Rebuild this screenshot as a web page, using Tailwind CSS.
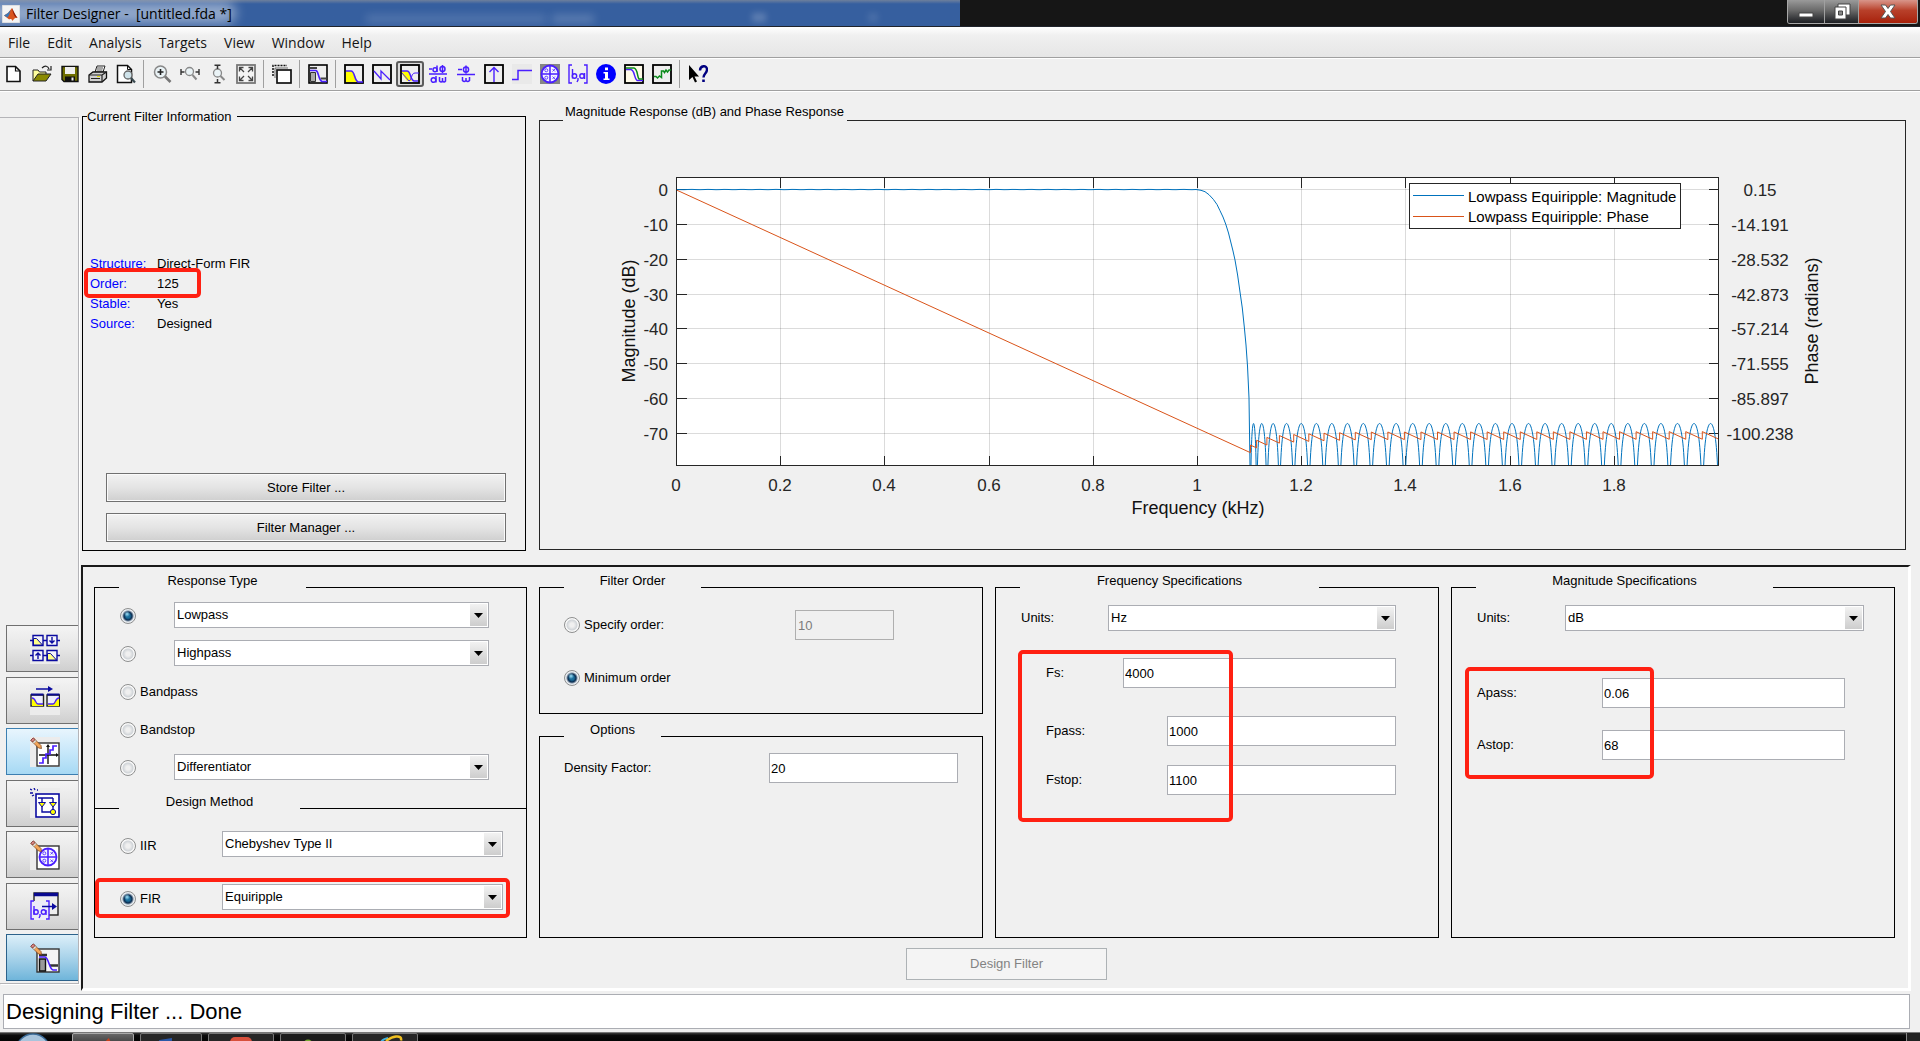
<!DOCTYPE html>
<html lang="en">
<head>
<meta charset="utf-8">
<title>Filter Designer</title>
<script src="https://cdn.jsdelivr.net/npm/@tailwindcss/browser@4"></script>
</head>
<body class="min-h-screen flex flex-col overflow-hidden bg-[#f0f0f0] text-black text-[13px] leading-[16px] font-['Liberation_Sans',Arial,sans-serif]">

<!-- shared symbols -->
<svg class="hidden">
  <symbol id="pencil" viewBox="0 0 12 12">
    <path d="M1 3.5 3.5 1 11 8.5 11.500 11.500 8.500 11Z" fill="#f2a65a" stroke="#7a3a10" stroke-width=".7"/>
    <path d="M.8 3.2 3.2.8 5 2.600 2.600 5Z" fill="#d98585" stroke="#6b2d2d" stroke-width=".7"/>
    <path d="M3 5.400 5.400 3 6.400 4 4 6.400Z" fill="#fff" stroke="#777" stroke-width=".5"/>
  </symbol>
  <symbol id="polezero" viewBox="0 0 20 20">
    <circle cx="10" cy="10" r="8.500" fill="#f4f4ff" stroke="#4a1fff" stroke-width="1.800"/>
    <path d="M10 1.500v17M1.500 10h17" stroke="#4a1fff" stroke-width="1.500"/>
    <path d="m12.500 5 2.500 2.500m0-2.500-2.500 2.500M12.500 12.500l2.500 2.500m0-2.500-2.500 2.500" stroke="#4a1fff" stroke-width=".8"/>
    <circle cx="6.300" cy="6.300" r="1.500" fill="none" stroke="#4a1fff" stroke-width=".8"/>
    <circle cx="6.300" cy="13.700" r="1.500" fill="none" stroke="#4a1fff" stroke-width=".8"/>
  </symbol>
</svg>

<header class="relative h-[27px] flex items-stretch bg-[#161616] border-b border-[#20242c] overflow-hidden">
  <div class="relative w-1/2 bg-linear-to-b from-[#6d7f9c] via-[#365f9f] via-15% to-[#365f9f] overflow-hidden flex items-center gap-[6px] pl-[2px] pt-[2px]">
    <div class="absolute -left-4 top-[2px] w-[252px] h-[22px] rounded-full bg-white/45 blur-[6px]"></div>
    <div class="absolute left-[366px] top-[15px] w-[180px] h-[8px] bg-white/15 blur-[4px]"></div>
    <div class="absolute left-[552px] top-[15px] w-[42px] h-[8px] bg-white/20 blur-[4px]"></div>
    <div class="absolute left-[752px] top-[13px] w-[14px] h-[9px] bg-white/20 blur-[3px]"></div>
    <div class="absolute left-[868px] top-[13px] w-[10px] h-[9px] bg-white/10 blur-[3px]"></div>
    <svg class="relative size-[18px]" viewBox="0 0 18 18"><rect width="18" height="18" fill="#f4f4f4" stroke="#c4c8d0"/><path d="M2 10.500 6 8l4-5c1 2 2.500 6 5.500 10-2-.5-3 0-5 3-.8-2-1.800-2.500-3.300-1.500Z" fill="#d9541e"/><path d="M2 10.500 6 8l2.500-3c-.5 3-1.500 5.500-3 7.500Z" fill="#3a78b8"/><path d="M10 3c1 2 2.500 6 5.500 10-3-1-4-3-5.500-10Z" fill="#8a1c0c"/></svg>
    <h1 class="relative text-[14px] leading-[20px] whitespace-pre font-['Open_Sans',sans-serif]">Filter Designer -  [untitled.fda *]</h1>
  </div>
  <div class="flex-1"></div>
  <div class="flex h-[24px] mr-[2px] border-x border-b border-[#a8a8a8] rounded-b-[3px] overflow-hidden">
    <button aria-label="Minimize" class="w-[37px] flex items-center justify-center bg-linear-to-b from-[#9a9a9a] via-[#6a6a6a] via-45% to-[#1e2024] border-r border-[#a0a0a0]"><svg class="w-[18px] h-[18px]" viewBox="0 0 18 18"><path d="M2 10h14v4H2z" fill="#fff" stroke="#444"/></svg></button>
    <button aria-label="Restore" class="w-[34px] flex items-center justify-center bg-linear-to-b from-[#9a9a9a] via-[#6a6a6a] via-45% to-[#1e2024] border-r border-[#a0a0a0]"><svg class="w-[18px] h-[18px]" viewBox="0 0 18 18"><path d="M5 1h12v11H5z" fill="#fff" stroke="#444"/><path d="M2 4h11v12H2z" fill="#fff" stroke="#444"/><path d="M5.500 8h4v4h-4z" fill="#888" stroke="#444"/></svg></button>
    <button aria-label="Close" class="w-[58px] flex items-center justify-center bg-linear-to-b from-[#d8958a] via-[#b8402a] via-45% to-[#a82008]"><svg class="w-[18px] h-[18px]" viewBox="0 0 18 18"><path d="m2 2 4.500 0 2.500 3.500 2.500-3.500 4.500 0-4.500 6.500 4.500 6.500h-4.500l-2.500-3.500-2.500 3.500h-4.500l4.500-6.500Z" fill="#fff" stroke="#555"/></svg></button>
  </div>
</header>

<nav class="h-[31px] flex items-center gap-[17px] pl-[8px] pt-[2px] bg-linear-to-b from-white from-0% via-[#f0f0f0] via-28% to-[#e6e6e6] border-b border-[#a0a0a0] text-[14px] leading-[20px] font-['Open_Sans',sans-serif] text-[#151515]">
  <a href="#">File</a><a href="#">Edit</a><a href="#">Analysis</a><a href="#">Targets</a><a href="#">View</a><a href="#">Window</a><a href="#">Help</a>
</nav>

<div role="toolbar" class="h-[33px] flex items-center pb-[2px] border-t border-t-white border-b border-b-[#a0a0a0] shadow-[0_1px_0_#fff]">
  <button aria-label="New" class="w-[28px] h-[26px] grid place-items-center"><svg class="size-[20px]" viewBox="0 0 20 20"><path d="M3 2.500h8.500L16 7v10.500H3Z" fill="#fff" stroke="#111" stroke-width="1.600"/><path d="M11.500 2.500V7H16" fill="none" stroke="#111" stroke-width="1.200"/></svg></button>
  <button aria-label="Open" class="w-[28px] h-[26px] grid place-items-center"><svg class="size-[20px]" viewBox="0 0 20 20"><path d="M1 17V6h5l1.500 2H14v3" fill="#ffff9c" stroke="#222"/><path d="M1 17 6 10h13l-5 7Z" fill="#8a8a00" stroke="#222"/><path d="M10 4c3-3 6-2 7 1m2-3v4h-4" fill="none" stroke="#222" stroke-width="1.200"/></svg></button>
  <button aria-label="Save" class="w-[28px] h-[26px] grid place-items-center"><svg class="size-[20px]" viewBox="0 0 20 20"><path d="M2 2.500h16v15H4l-2-2Z" fill="#6e6e00" stroke="#111" stroke-width="1.400"/><path d="M5 3h10v7H5z" fill="#eee"/><path d="M5 12.500h10v5H5z" fill="#111"/><path d="M11.500 13.500h2v3h-2z" fill="#eee"/></svg></button>
  <button aria-label="Print" class="w-[28px] h-[26px] grid place-items-center"><svg class="size-[20px]" viewBox="0 0 20 20"><path d="M7 8 9 2h8l-2 6Z" fill="#fff" stroke="#222"/><path d="M9 4h6M8.500 6h6" stroke="#222" stroke-width=".8"/><path d="m1 11 4-3h13.500v6L14 18H1Z" fill="#d0d0d0" stroke="#111" stroke-width="1.300"/><path d="M1 11h13v7M14 11l4.500-3M3 14.500h9" fill="none" stroke="#222" stroke-width="1.200"/><path d="M9 12.500h3" stroke="#dd0" /></svg></button>
  <button aria-label="Print preview" class="w-[28px] h-[26px] grid place-items-center"><svg class="size-[20px]" viewBox="0 0 20 20"><path d="M1.500 1.500h10l4 4v13h-14Z" fill="#fff" stroke="#111" stroke-width="1.500"/><path d="M11.500 1.500v4h4" fill="none" stroke="#111"/><circle cx="12" cy="11" r="4" fill="#cfe3ea" stroke="#666" stroke-width="1.300"/><path d="m15 14 4 4.500" stroke="#3a4a50" stroke-width="2.200"/></svg></button>
  <span class="w-px h-[28px] ml-[3px] mr-[4px] bg-[#a0a0a0]"></span>
  <button aria-label="Zoom in" class="w-[28px] h-[26px] grid place-items-center"><svg class="size-[20px]" viewBox="0 0 20 20"><circle cx="8.500" cy="8" r="6" fill="#eaf3f6" stroke="#888" stroke-width="1.500"/><path d="M5.500 8h6M8.500 5v6" stroke="#222" stroke-width="1.600"/><path d="m13 12.500 5.500 5.500" stroke="#777" stroke-width="2.600"/></svg></button>
  <button aria-label="Zoom X" class="w-[28px] h-[26px] grid place-items-center"><svg class="size-[20px]" viewBox="0 0 20 20"><circle cx="9.500" cy="7.500" r="4" fill="#eaf3f6" stroke="#888" stroke-width="1.300"/><path d="m12.500 11 4 4.500" stroke="#888" stroke-width="2"/><path d="M1 5v6M19 5v6M1 8h3.500M15.500 8H19" stroke="#333" stroke-width="1.400"/></svg></button>
  <button aria-label="Zoom Y" class="w-[28px] h-[26px] grid place-items-center"><svg class="size-[20px]" viewBox="0 0 20 20"><circle cx="9.500" cy="9" r="4" fill="#eaf3f6" stroke="#888" stroke-width="1.300"/><path d="m12.500 12 4 4" stroke="#888" stroke-width="2"/><path d="M6.500 1.200h6M6.500 18.800h6M9.500 1.500V5M9.500 15v4" stroke="#333" stroke-width="1.500"/></svg></button>
  <button aria-label="Full view" class="w-[28px] h-[26px] grid place-items-center"><svg class="size-[20px]" viewBox="0 0 20 20"><rect x="1" y="1" width="18" height="18" fill="#f4f4f4" stroke="#777" stroke-width="1.800"/><path d="M3.500 7.500v-4h4M12.500 3.500h4v4M16.500 12.500v4h-4M7.500 16.500h-4v-4M4 4l4 4M16 4l-4 4M16 16l-4-4M4 16l4-4" fill="none" stroke="#444" stroke-width="1.300"/></svg></button>
  <span class="w-px h-[28px] ml-[3px] mr-[4px] bg-[#a0a0a0]"></span>
  <button aria-label="New analysis window" class="w-[28px] h-[26px] grid place-items-center"><svg class="size-[20px]" viewBox="0 0 20 20"><path d="M1 12V1.500h14" fill="none" stroke="#111" stroke-width="1.500" stroke-dasharray="2 1"/><path d="M3 14V4h13" fill="none" stroke="#333" stroke-width=".7"/><rect x="5" y="6" width="14" height="13" fill="#fff" stroke="#111" stroke-width="1.700"/></svg></button>
  <span class="w-px h-[28px] ml-[3px] mr-[4px] bg-[#a0a0a0]"></span>
  <button aria-label="Filter specifications" class="w-[28px] h-[26px] grid place-items-center"><svg class="size-[20px]" viewBox="0 0 20 20"><rect x="1" y="1" width="18" height="18" fill="#eee" stroke="#000" stroke-width="1.600"/><path d="M2.500 8.500h5v9h-5z" fill="#aaa" stroke="#333"/><path d="M2 4h7M12.500 14.500h6" stroke="#444" stroke-width="2.200"/><path d="M2 6.500h6c3 1 2 9 6 11h5" fill="none" stroke="#4a1fff" stroke-width="1.600"/></svg></button>
  <span class="w-px h-[28px] ml-[3px] mr-[4px] bg-[#a0a0a0]"></span>
  <button aria-label="Magnitude response" class="w-[28px] h-[26px] grid place-items-center"><svg class="size-[20px]" viewBox="0 0 20 20"><rect x="1" y="1" width="18" height="18" fill="#eee" stroke="#000" stroke-width="1.800"/><path d="M2 7h6c3 1 3 8 5 11H2Z" fill="#ff0"/><path d="M2 7h5c4 0 3 9 7 11h5" fill="none" stroke="#4a1fff" stroke-width="1.600"/></svg></button>
  <button aria-label="Phase response" class="w-[28px] h-[26px] grid place-items-center"><svg class="size-[20px]" viewBox="0 0 20 20"><rect x="1" y="1" width="18" height="18" fill="#eee" stroke="#000" stroke-width="1.800"/><path d="m2 7 7 8V7l9 9" fill="none" stroke="#4a1fff" stroke-width="1.300"/></svg></button>
  <button aria-label="Magnitude and phase responses" aria-pressed="true" class="w-[28px] h-[26px] grid place-items-center rounded-[3px] border-2 border-[#5c5c5c] bg-[#dcdcdc]"><svg class="size-[20px]" viewBox="0 0 20 20"><rect x="1" y="1" width="18" height="18" fill="#eee" stroke="#000" stroke-width="1.800"/><path d="M2 7h6c3 1 2 7 4 10H7L2 10Z" fill="#ff0"/><path d="M2 7h5c4 0 3 9 7 10h4" fill="none" stroke="#4a1fff" stroke-width="1.500"/><path d="m2 9 7 8c3-1 2-8 6-8h4" fill="none" stroke="#4a1fff"/></svg></button>
  <button aria-label="Group delay" class="w-[28px] h-[26px] grid place-items-center"><svg class="size-[20px]" viewBox="0 0 20 20" fill="none" stroke="#4a1fff" stroke-width="1.500"><path d="M1 10h18M1 5h3M9 1.500V8"/><circle cx="7" cy="5.800" r="2"/><circle cx="14.500" cy="5" r="2.500"/><path d="M14.500 1v8M8 12v6.500M11.500 13v4q1.700 2 3 0v-3m0 3q1.700 2 3 0v-4"/><circle cx="5.500" cy="16" r="2.300"/></svg></button>
  <button aria-label="Phase delay" class="w-[28px] h-[26px] grid place-items-center"><svg class="size-[20px]" viewBox="0 0 20 20" fill="none" stroke="#4a1fff" stroke-width="1.500"><path d="M1 10.500h18M2 5.500h4M10 1.500v8M6.500 13v3.500q1.700 2 3.500 0V14m0 2.500q1.700 2 3.500 0V13"/><circle cx="10" cy="5.500" r="2.600"/></svg></button>
  <button aria-label="Impulse response" class="w-[28px] h-[26px] grid place-items-center"><svg class="size-[20px]" viewBox="0 0 20 20"><rect x="1" y="1" width="18" height="18" fill="#eee" stroke="#000" stroke-width="1.800"/><path d="M10 18V4M5.500 8 10 3.500 14.500 8" fill="none" stroke="#4a1fff" stroke-width="1.400"/></svg></button>
  <button aria-label="Step response" class="w-[28px] h-[26px] grid place-items-center"><svg class="size-[20px]" viewBox="0 0 20 20"><rect width="20" height="20" fill="#e9e9e9"/><path d="M0 15.500h6v-9h14" fill="none" stroke="#4a1fff" stroke-width="1.500"/></svg></button>
  <button aria-label="Pole/zero plot" class="w-[28px] h-[26px] grid place-items-center"><svg class="size-[20px]" viewBox="0 0 20 20"><rect width="20" height="20" fill="#858585"/><use href="#polezero"/></svg></button>
  <button aria-label="Filter coefficients" class="w-[28px] h-[26px] grid place-items-center"><svg class="size-[20px]" viewBox="0 0 20 20" fill="none" stroke="#4a1fff" stroke-width="1.400"><path d="M4 1H1v18h3M16 1h3v18h-3M4.500 5v9.500M10 14v2l-1 2M16.500 9v6"/><circle cx="6.500" cy="12" r="2.200"/><circle cx="14" cy="12" r="2.200"/></svg></button>
  <button aria-label="Filter information" class="w-[28px] h-[26px] grid place-items-center"><svg class="size-[20px]" viewBox="0 0 20 20"><circle cx="10" cy="10" r="10" fill="#00f"/><path d="M9 3.500h3v2.700H9zM7.500 8H12v6.500h1.500V16h-6v-1.500H9V9.500H7.500Z" fill="#fff"/></svg></button>
  <button aria-label="Magnitude response estimate" class="w-[28px] h-[26px] grid place-items-center"><svg class="size-[20px]" viewBox="0 0 20 20"><rect x="1" y="1" width="18" height="18" fill="#fffbe8" stroke="#000" stroke-width="1.800"/><path d="M2 5.500h5c4 1 3 9 6 11h6" fill="none" stroke="#4a1fff" stroke-width="1.500"/><path d="M2 4h8c4 1 3 9 5 11h4" fill="none" stroke="#0a8a1a" stroke-width="1.500"/></svg></button>
  <button aria-label="Round-off noise" class="w-[28px] h-[26px] grid place-items-center"><svg class="size-[20px]" viewBox="0 0 20 20"><rect x="1" y="1" width="18" height="18" fill="#eee" stroke="#000" stroke-width="1.800"/><path d="M2 12.500h2l1.500 1.500 2-2 2 1.500V7h2l1 1.500L14 6l1.500 2L17 6h2" fill="none" stroke="#0a8a1a" stroke-width="1.500"/></svg></button>
  <span class="w-px h-[28px] ml-[3px] mr-[4px] bg-[#a0a0a0]"></span>
  <button aria-label="What's this?" class="w-[28px] h-[26px] grid place-items-center"><svg class="size-[20px]" viewBox="0 0 20 20"><path d="M1 1v15l3.500-3L7 18.500l2-1-2.500-5H11Z" fill="#000"/><path d="M12 6.500c0-5 7-6 7-1 0 4-3.500 4-3.500 8" fill="none" stroke="#000080" stroke-width="2.400"/><path d="M14.200 15.500h2.600V18h-2.600z" fill="#000080"/></svg></button>
</div>

<main class="flex-1 flex">
  <aside class="w-[79px] shrink-0 mt-[26px] mb-[8px] pl-[6px] pb-[2px] border-y border-r border-[#b4b4b8] flex flex-col justify-end shadow-[1px_1px_0_#fff]">
    <div class="h-[356px] flex flex-col justify-between">
      <button aria-label="Create a multirate filter" class="h-[47px] pl-[23px] border border-r-0 border-[#707070] bg-linear-to-b from-[#f4f4f4] via-[#e6e6e6] via-50% to-[#cfcfcf]"><svg class="size-[30px]" viewBox="0 0 30 30"><rect width="30" height="30" fill="#ececec"/><g fill="none" stroke="#0a0aa0" stroke-width="1.400"><path d="M0 6.500h30M0 21.500h30"/><path d="M3 1.500h10v10H3zM17 1.500h10v10H17zM3 16.500h10v10H3zM17 16.500h10v10H17z" fill="#f4f4fa"/><path d="M3.500 4.500h3l6 6.500h-9zM17.500 19.500h3l6 6.500h-9z" fill="#ff8" stroke-width="1"/><path d="M22 3v6m-2.500-2.500L22 9l2.500-2.500M8 25v-6m-2.500 2.500L8 19l2.500 2.500"/></g></svg></button>
      <button aria-label="Transform filter" class="h-[47px] pl-[23px] border border-r-0 border-[#707070] bg-linear-to-b from-[#f4f4f4] via-[#e6e6e6] via-50% to-[#cfcfcf]"><svg class="size-[30px]" viewBox="0 0 30 30"><rect width="30" height="30" fill="#ececec"/><path d="M6 4h14" stroke="#0a0aa0" stroke-width="1.500"/><path d="m18 1 5 3-5 3Z" fill="#0a0aa0"/><path d="M1 10h12.500v11H1zM17 10h12.500v11H17z" fill="#eef" stroke="#222" stroke-width="1.400"/><path d="M1 9.500h12.500M17 9.500h12.500" stroke="#0a0a90" stroke-width="2.200"/><path d="M2 13c4 0 4 6 7 6h4v2H2zM29 13c-4 0-4 6-7 6h-4v2h11z" fill="#ff0"/><path d="M2 13c4 0 3 6 6 6h5M29 13c-4 0-3 6-6 6h-5" fill="none" stroke="#4a1fff" stroke-width="1.300"/></svg></button>
      <button aria-label="Set quantization parameters" class="h-[47px] pl-[23px] border border-r-0 border-[#3c7fb1] bg-linear-to-b from-[#e8f5fd] via-[#c8e8fa] via-50% to-[#a6d9f4]"><svg class="size-[30px]" viewBox="0 0 30 30"><rect width="30" height="30" fill="#ececec"/><rect x="7" y="6" width="22" height="23" fill="#fff" stroke="#333" stroke-width="1.400"/><path d="M18 27V9M9 18h17" stroke="#111" stroke-width="1.400"/><path d="m18 7-2 3h4zM29 18l-3-2v4z" fill="#111"/><path d="M9 26h4v-5h3v-4h4v-4h3V9h4" fill="none" stroke="#4a1fff" stroke-width="1.700"/><use href="#pencil" width="12" height="12"/></svg></button>
      <button aria-label="Realize model" class="h-[47px] pl-[23px] border border-r-0 border-[#707070] bg-linear-to-b from-[#f4f4f4] via-[#e6e6e6] via-50% to-[#cfcfcf]"><svg class="size-[30px]" viewBox="0 0 30 30"><rect width="30" height="30" fill="#ececec"/><path d="m0 1 2 1M0 5h3M4 0l1 2M7 2h1M2 8l2-1" stroke="#0a0aa0" stroke-width="1.300"/><rect x="6" y="6" width="23" height="23" fill="#fff" stroke="#0a0aa0" stroke-width="1.600"/><path d="M8 10h15M12 10v14h10M23 10v14" fill="none" stroke="#0a0aa0" stroke-width="1.400"/><path d="M8.500 14.500h7L12 19zM19.500 14.500h7L23 19z" fill="#ff0" stroke="#0a0aa0"/><circle cx="23" cy="24" r="2.600" fill="#ff0" stroke="#0a0aa0"/></svg></button>
      <button aria-label="Pole/zero editor" class="h-[47px] pl-[23px] border border-r-0 border-[#707070] bg-linear-to-b from-[#f4f4f4] via-[#e6e6e6] via-50% to-[#cfcfcf]"><svg class="size-[30px]" viewBox="0 0 30 30"><rect width="30" height="30" fill="#ececec"/><rect x="7" y="6" width="22" height="23" fill="#fff" stroke="#333" stroke-width="1.400"/><use href="#polezero" x="8" y="7" width="20" height="20"/><use href="#pencil" width="12" height="12"/></svg></button>
      <button aria-label="Import filter" class="h-[47px] pl-[23px] border border-r-0 border-[#707070] bg-linear-to-b from-[#f4f4f4] via-[#e6e6e6] via-50% to-[#cfcfcf]"><svg class="size-[30px]" viewBox="0 0 30 30"><rect x="4" y="2" width="24" height="22" fill="#eee" stroke="#222" stroke-width="1.400"/><path d="M4 3.500h24" stroke="#0a0a90" stroke-width="3.500"/><rect x="0" y="10" width="19" height="19" fill="#ececf8"/><g fill="none" stroke="#4a1fff" stroke-width="1.400"><path d="M4 10H1v18h3M16 10h3v18h-3M4 15v9M10 23v2l-1 2M16 19v5"/><circle cx="6" cy="21" r="2.200"/><circle cx="13.500" cy="21" r="2.200"/></g><path d="M12 15.500h12" stroke="#0a0aa0" stroke-width="1.500"/><path d="m22 12 5 3.500-5 3.500z" fill="#0a0aa0"/></svg></button>
      <button aria-label="Design filter panel" class="h-[47px] pl-[23px] border border-r-0 border-[#2c628b] bg-linear-to-b from-[#dceff9] via-[#a9d3ea] via-50% to-[#6fb5da]"><svg class="size-[30px]" viewBox="0 0 30 30"><rect x="7" y="6" width="22" height="23" fill="#f4f4f4" stroke="#333" stroke-width="1.400"/><path d="M9.500 16h6v12h-6z" fill="#999" stroke="#111" stroke-width="1.400"/><path d="M9 12h8M20 22.500h8" stroke="#333" stroke-width="2.600"/><path d="M9 14h6c4 1 4 12 8 13h4" fill="none" stroke="#4a1fff" stroke-width="1.600"/><use href="#pencil" width="12" height="12"/></svg></button>
    </div>
  </aside>

  <div class="flex-1 min-w-0 pt-[25px] pl-[2px] pr-[9px] flex flex-col">
    <div class="flex gap-[13px] pl-px pr-[5px]">
      <section class="relative w-[444px] shrink-0 border border-black flex flex-col">
        <h2 class="absolute -top-[8px] left-[4px] pr-[5px] bg-[#f0f0f0]">Current Filter Information</h2>
        <dl class="relative mt-[137px] ml-[7px] grid grid-cols-[67px_1fr] leading-[20px]">
          <dt class="text-[#00f]">Structure:</dt><dd>Direct-Form FIR</dd>
          <dt class="text-[#00f]">Order:</dt><dd>125</dd>
          <dt class="text-[#00f]">Stable:</dt><dd>Yes</dd>
          <dt class="text-[#00f]">Source:</dt><dd>Designed</dd>
          <span class="absolute -left-[6px] top-[14px] w-[117px] h-[30px] rounded-[5px] border-4 border-[#ff2012] pointer-events-none"></span>
        </dl>
        <div class="mt-auto mb-[8px] ml-[23px] mr-[19px] flex flex-col gap-[11px]">
          <button class="h-[29px] border border-[#707070] shadow-[inset_0_0_0_1px_#fafafa] bg-linear-to-b from-[#f2f2f2] via-[#e4e4e4] via-50% to-[#cfcfcf]">Store Filter ...</button>
          <button class="h-[29px] border border-[#707070] shadow-[inset_0_0_0_1px_#fafafa] bg-linear-to-b from-[#f2f2f2] via-[#e4e4e4] via-50% to-[#cfcfcf]">Filter Manager ...</button>
        </div>
      </section>

      <section class="relative flex-1 min-w-0 mt-[4px] mb-px border border-[#262626]">
        <h2 class="absolute -top-[17px] left-[23px] h-[20px] pl-[2px] pr-[3px] bg-[#f0f0f0]">Magnitude Response (dB) and Phase Response</h2>
        <svg id="plot" class="block w-full h-auto" viewBox="540 121 1365 428" font-size="17" fill="#262626">
          <defs><clipPath id="axes"><rect x="676" y="177" width="1043" height="289"/></clipPath></defs>
          <rect x="676" y="177" width="1043" height="289" fill="#fff"/>
          <g id="grid" stroke="#000" stroke-opacity=".14" shape-rendering="crispEdges"></g>
          <g id="ticks" stroke="#262626" shape-rendering="crispEdges"></g>
          <g clip-path="url(#axes)" fill="none">
            <path id="magnitude" stroke="#0072bd"/>
            <path id="phase" stroke="#d95319"/>
          </g>
          <rect x="676.5" y="177.5" width="1042" height="288" fill="none" stroke="#262626"/>
          <g id="labels"></g>
          <g font-size="18" text-anchor="middle" fill="#111">
            <text x="1198" y="514">Frequency (kHz)</text>
            <text transform="translate(635 321) rotate(-90)">Magnitude (dB)</text>
            <text transform="translate(1818 321) rotate(-90)">Phase (radians)</text>
          </g>
          <rect x="1409.5" y="183.5" width="271" height="45" fill="#fff" stroke="#262626"/>
          <path d="M1413 195.500h51" stroke="#0072bd"/>
          <path d="M1413 216.500h51" stroke="#d95319"/>
          <g font-size="15" fill="#000">
            <text x="1468" y="202">Lowpass Equiripple: Magnitude</text>
            <text x="1468" y="222">Lowpass Equiripple: Phase</text>
          </g>
        </svg>
      </section>
    </div>

    <form class="mt-[14px] border-t-2 border-l-2 border-t-[#1a1a1a] border-l-[#1a1a1a] border-r-[3px] border-b-[3px] border-r-white border-b-white pt-[20px] pb-[8px] pl-[11px] pr-[13px]">
      <div class="grid grid-cols-[433fr_444fr_444fr_444fr] gap-[12px]">

        <section class="relative border border-black pt-[14px]">
          <h2 class="absolute -top-[17px] left-[24px] w-[187px] h-[20px] bg-[#f0f0f0] text-center leading-[20px]">Response Type</h2>
          <div class="pl-[25px] pr-[37px] flex flex-col gap-[12px]">
            <div class="flex items-center h-[26px]">
              <input type="radio" name="response" aria-label="Lowpass family" checked class="appearance-none mt-[2px] size-[16px] rounded-full border border-[#8e8f8f] bg-[radial-gradient(circle,#f0f0f0_0_2px,#d0d4d8_5px,#f8f8f8_6px)] checked:bg-[radial-gradient(circle_at_6px_5px,#9fe0f8,transparent_3px),radial-gradient(circle,#1b6f9c_0_2px,#0b2c50_4px,#e8ecf0_6px)]">
              <div class="relative flex-1 ml-[38px] h-[26px]"><select aria-label="Lowpass type" class="appearance-none w-full h-full pl-[2px] bg-white border border-[#abadb3]"><option>Lowpass</option></select><span class="absolute right-[2px] inset-y-[2px] w-[17px] bg-linear-to-b from-[#f2f2f2] to-[#cdcdcd] grid place-items-center pointer-events-none"><svg class="w-[9px] h-[5px]" viewBox="0 0 9 5"><path d="M0 0h9L4.500 5Z"/></svg></span></div>
            </div>
            <div class="flex items-center h-[26px]">
              <input type="radio" name="response" aria-label="Highpass family" class="appearance-none mt-[2px] size-[16px] rounded-full border border-[#8e8f8f] bg-[radial-gradient(circle,#f0f0f0_0_2px,#d0d4d8_5px,#f8f8f8_6px)]">
              <div class="relative flex-1 ml-[38px] h-[26px]"><select aria-label="Highpass type" class="appearance-none w-full h-full pl-[2px] bg-white border border-[#abadb3]"><option>Highpass</option></select><span class="absolute right-[2px] inset-y-[2px] w-[17px] bg-linear-to-b from-[#f2f2f2] to-[#cdcdcd] grid place-items-center pointer-events-none"><svg class="w-[9px] h-[5px]" viewBox="0 0 9 5"><path d="M0 0h9L4.500 5Z"/></svg></span></div>
            </div>
            <label class="flex items-center gap-[4px] h-[26px] pt-[2px]"><input type="radio" name="response" class="appearance-none size-[16px] rounded-full border border-[#8e8f8f] bg-[radial-gradient(circle,#f0f0f0_0_2px,#d0d4d8_5px,#f8f8f8_6px)]">Bandpass</label>
            <label class="flex items-center gap-[4px] h-[26px] pt-[2px]"><input type="radio" name="response" class="appearance-none size-[16px] rounded-full border border-[#8e8f8f] bg-[radial-gradient(circle,#f0f0f0_0_2px,#d0d4d8_5px,#f8f8f8_6px)]">Bandstop</label>
            <div class="flex items-center h-[26px]">
              <input type="radio" name="response" aria-label="Other response" class="appearance-none mt-[2px] size-[16px] rounded-full border border-[#8e8f8f] bg-[radial-gradient(circle,#f0f0f0_0_2px,#d0d4d8_5px,#f8f8f8_6px)]">
              <div class="relative flex-1 ml-[38px] h-[26px]"><select aria-label="Other response type" class="appearance-none w-full h-full pl-[2px] bg-white border border-[#abadb3]"><option>Differentiator</option></select><span class="absolute right-[2px] inset-y-[2px] w-[17px] bg-linear-to-b from-[#f2f2f2] to-[#cdcdcd] grid place-items-center pointer-events-none"><svg class="w-[9px] h-[5px]" viewBox="0 0 9 5"><path d="M0 0h9L4.500 5Z"/></svg></span></div>
            </div>
          </div>
          <div class="relative mt-[28px] border-t border-black pt-[22px] pb-[27px] flex flex-col gap-[27px]">
            <h2 class="absolute -top-[17px] left-[24px] w-[181px] h-[20px] bg-[#f0f0f0] text-center leading-[20px]">Design Method</h2>
            <div class="flex items-center h-[26px] pl-[25px] pr-[23px]">
              <label class="w-[102px] flex items-center gap-[4px] pt-[3px]"><input type="radio" name="method" class="appearance-none size-[16px] rounded-full border border-[#8e8f8f] bg-[radial-gradient(circle,#f0f0f0_0_2px,#d0d4d8_5px,#f8f8f8_6px)]">IIR</label>
              <div class="relative flex-1 h-[26px]"><select aria-label="IIR method" class="appearance-none w-full h-full pl-[2px] bg-white border border-[#abadb3]"><option>Chebyshev Type II</option></select><span class="absolute right-[2px] inset-y-[2px] w-[17px] bg-linear-to-b from-[#f2f2f2] to-[#cdcdcd] grid place-items-center pointer-events-none"><svg class="w-[9px] h-[5px]" viewBox="0 0 9 5"><path d="M0 0h9L4.500 5Z"/></svg></span></div>
            </div>
            <div class="relative flex items-center h-[26px] pl-[25px] pr-[23px]">
              <label class="w-[102px] flex items-center gap-[4px] pt-[3px]"><input type="radio" name="method" checked class="appearance-none size-[16px] rounded-full border border-[#8e8f8f] bg-[radial-gradient(circle,#f0f0f0_0_2px,#d0d4d8_5px,#f8f8f8_6px)] checked:bg-[radial-gradient(circle_at_6px_5px,#9fe0f8,transparent_3px),radial-gradient(circle,#1b6f9c_0_2px,#0b2c50_4px,#e8ecf0_6px)]">FIR</label>
              <div class="relative flex-1 h-[26px]"><select aria-label="FIR method" class="appearance-none w-full h-full pl-[2px] bg-white border border-[#abadb3]"><option>Equiripple</option></select><span class="absolute right-[2px] inset-y-[2px] w-[17px] bg-linear-to-b from-[#f2f2f2] to-[#cdcdcd] grid place-items-center pointer-events-none"><svg class="w-[9px] h-[5px]" viewBox="0 0 9 5"><path d="M0 0h9L4.500 5Z"/></svg></span></div>
              <span class="absolute left-0 right-[16px] -top-[6px] -bottom-[8px] rounded-[5px] border-4 border-[#ff2012] pointer-events-none"></span>
            </div>
          </div>
        </section>

        <div class="flex flex-col gap-[22px]">
          <section class="relative border border-black pt-[22px] pb-[22px] pl-[24px]">
            <h2 class="absolute -top-[17px] left-[24px] w-[137px] h-[20px] bg-[#f0f0f0] text-center leading-[20px]">Filter Order</h2>
            <div class="flex items-center h-[30px]">
              <label class="w-[231px] flex items-center gap-[4px]"><input type="radio" name="order" class="appearance-none size-[16px] rounded-full border border-[#8e8f8f] bg-[radial-gradient(circle,#f0f0f0_0_2px,#d0d4d8_5px,#f8f8f8_6px)]">Specify order:</label>
              <input aria-label="Order" type="text" value="10" disabled class="w-[99px] h-[30px] pl-[2px] border border-[#afafaf] text-[#7c7c7c]">
            </div>
            <label class="mt-[25px] flex items-center gap-[4px] h-[26px]"><input type="radio" name="order" checked class="appearance-none size-[16px] rounded-full border border-[#8e8f8f] checked:bg-[radial-gradient(circle_at_6px_5px,#9fe0f8,transparent_3px),radial-gradient(circle,#1b6f9c_0_2px,#0b2c50_4px,#e8ecf0_6px)]">Minimum order</label>
          </section>
          <section class="relative flex-1 border border-black pt-[16px] pl-[24px] pr-[24px]">
            <h2 class="absolute -top-[17px] left-[24px] w-[97px] h-[20px] bg-[#f0f0f0] text-center leading-[20px]">Options</h2>
            <div class="flex items-center"><label for="density" class="w-[205px]">Density Factor:</label><input id="density" type="text" value="20" class="flex-1 min-w-0 h-[30px] pl-px bg-white border border-[#abadb3]"></div>
          </section>
        </div>

        <section class="relative border border-black pt-[17px] pl-[25px] pr-[42px]">
          <h2 class="absolute -top-[17px] left-[24px] w-[299px] h-[20px] bg-[#f0f0f0] text-center leading-[20px]">Frequency Specifications</h2>
          <div class="flex items-center">
            <label for="funits" class="w-[87px]">Units:</label>
            <div class="relative flex-1 h-[26px]"><select id="funits" class="appearance-none w-full h-full pl-[2px] bg-white border border-[#abadb3]"><option>Hz</option></select><span class="absolute right-[2px] inset-y-[2px] w-[17px] bg-linear-to-b from-[#f2f2f2] to-[#cdcdcd] grid place-items-center pointer-events-none"><svg class="w-[9px] h-[5px]" viewBox="0 0 9 5"><path d="M0 0h9L4.500 5Z"/></svg></span></div>
          </div>
          <div class="relative mt-[27px] pl-[25px]">
            <div class="flex items-center"><label for="fs" class="w-[77px]">Fs:</label><input id="fs" type="text" value="4000" class="flex-1 min-w-0 h-[30px] pl-px bg-white border border-[#abadb3]"></div>
            <div class="mt-[28px] flex items-center"><label for="fpass" class="w-[121px]">Fpass:</label><input id="fpass" type="text" value="1000" class="flex-1 min-w-0 h-[30px] pl-px bg-white border border-[#abadb3]"></div>
            <div class="mt-[19px] flex items-center"><label for="fstop" class="w-[121px]">Fstop:</label><input id="fstop" type="text" value="1100" class="flex-1 min-w-0 h-[30px] pl-px bg-white border border-[#abadb3]"></div>
            <span class="absolute -left-[3px] w-[215px] -top-[8px] -bottom-[27px] rounded-[5px] border-4 border-[#ff2012] pointer-events-none"></span>
          </div>
        </section>

        <section class="relative border border-black pt-[17px] pl-[25px] pr-[30px]">
          <h2 class="absolute -top-[17px] left-[24px] w-[297px] h-[20px] bg-[#f0f0f0] text-center leading-[20px]">Magnitude Specifications</h2>
          <div class="flex items-center">
            <label for="munits" class="w-[88px]">Units:</label>
            <div class="relative flex-1 h-[26px]"><select id="munits" class="appearance-none w-full h-full pl-[2px] bg-white border border-[#abadb3]"><option>dB</option></select><span class="absolute right-[2px] inset-y-[2px] w-[17px] bg-linear-to-b from-[#f2f2f2] to-[#cdcdcd] grid place-items-center pointer-events-none"><svg class="w-[9px] h-[5px]" viewBox="0 0 9 5"><path d="M0 0h9L4.500 5Z"/></svg></span></div>
          </div>
          <div class="relative mt-[47px] pr-[19px]">
            <div class="flex items-center"><label for="apass" class="w-[125px]">Apass:</label><input id="apass" type="text" value="0.06" class="flex-1 min-w-0 h-[30px] pl-px bg-white border border-[#abadb3]"></div>
            <div class="mt-[22px] flex items-center"><label for="astop" class="w-[125px]">Astop:</label><input id="astop" type="text" value="68" class="flex-1 min-w-0 h-[30px] pl-px bg-white border border-[#abadb3]"></div>
            <span class="absolute -left-[12px] w-[189px] -top-[11px] -bottom-[19px] rounded-[5px] border-4 border-[#ff2012] pointer-events-none"></span>
          </div>
        </section>
      </div>
      <div class="mt-[10px] pl-[24px] flex justify-center"><button type="button" disabled class="w-[201px] h-[32px] border border-[#adb2b5] bg-[#f4f4f4] text-[#838383]">Design Filter</button></div>
    </form>
  </div>
</main>

<div role="status" class="h-[35px] mt-[2px] ml-[3px] mr-[10px] px-[2px] flex items-center border border-[#abadb3] bg-white text-[22px] leading-[28px]">Designing Filter ... Done</div>

<footer class="mt-[3px] h-[9px] overflow-hidden flex gap-[6px] pl-[17px] bg-linear-to-b from-[#3c3c3c] via-[#0c0c0c] via-30% to-[#050505] border-t border-[#777]">
  <svg class="w-[32px] h-[8px] mr-[17px]" viewBox="0 0 32 8"><circle cx="16" cy="18" r="17" fill="#a8c4dc" stroke="#3c6c98" stroke-width="1.500"/></svg>
  <div class="w-[62px] h-[9px] border border-[#aaa] rounded-t-[2px] bg-linear-to-b from-[#666] to-[#4a4a4a]"><svg class="w-full h-[8px]" viewBox="0 0 62 8"><path d="m33 8 4-4 2 4z" fill="#c8401c"/></svg></div>
  <div class="w-[62px] h-[9px] border border-[#777] rounded-t-[2px] bg-[#262626]"><svg class="w-full h-[8px]" viewBox="0 0 62 8"><path d="m18 8 1-2 13-2v4z" fill="#2a58a8"/></svg></div>
  <div class="w-[66px] h-[9px] border border-[#777] rounded-t-[2px] bg-[#262626]"><svg class="w-full h-[8px]" viewBox="0 0 62 8"><rect x="20" y="3" width="22" height="12" rx="5" fill="#d8503c"/></svg></div>
  <div class="w-[66px] h-[9px] border border-[#777] rounded-t-[2px] bg-[#1c1c1c]"><svg class="w-full h-[8px]" viewBox="0 0 62 8"><circle cx="26" cy="10" r="4.500" fill="#78a832"/></svg></div>
  <div class="w-[66px] h-[9px] border border-[#777] rounded-t-[2px] bg-[#262626]"><svg class="w-full h-[8px]" viewBox="0 0 62 8"><path d="M27 8q2-3 7-4" fill="none" stroke="#40b0e0" stroke-width="2"/><path d="M32 7q5-4 10-4.500 6-.5 5 4" fill="none" stroke="#f0c020" stroke-width="2.500"/></svg></div>
  <div class="ml-auto w-[14px] h-[9px] border-l border-[#888] bg-[#222]"></div>
</footer>

<script>
  // Frequency response of the 125th order equiripple design
  const left = 676.5, right = 1718.5, top_ = 177.5, bottom = 465.5;
  const phaseText = ['0.15', '-14.191', '-28.532', '-42.873', '-57.214', '-71.555', '-85.897', '-100.238'];
  let grid = '', ticks = '', labels = '';
  const line = (x1, y1, x2, y2) => `<line x1="${x1}" y1="${y1}" x2="${x2}" y2="${y2}"/>`;
  for (let i = 0; i < 10; i++) {
    const x = Math.round(676 + i * 104.2) + .5;
    if (i) {
      grid += line(x, top_, x, bottom);
      ticks += line(x, top_, x, top_ + 10) + line(x, bottom - 10, x, bottom);
    }
    labels += `<text x="${x - .5}" y="491" text-anchor="middle">${+(i * .2).toFixed(1)}</text>`;
  }
  for (let i = 0; i < 8; i++) {
    const y = Math.round(189 + i * 34.86) + .5;
    grid += line(left, y, right, y);
    ticks += line(left, y, left + 10, y) + line(right - 10, y, right, y);
    labels += `<text x="668" y="${y + 6.5}" text-anchor="end">${-10 * i || 0}</text><text x="1760" y="${y + 6.5}" text-anchor="middle">${phaseText[i]}</text>`;
  }
  const put = (id, html) => document.getElementById(id).innerHTML = html;
  put('grid', grid); put('ticks', ticks); put('labels', labels);

  const nulls = [1250.500, 1256.600, 1266.900, 1279.400, 1293.700, 1308.800, 1324, 1339.600, 1355.300, 1371.300];
  while (nulls[nulls.length - 1] < 1715) nulls.push(nulls[nulls.length - 1] + 16.550);
  let mag = 'M676.5 189.500';
  for (let x = 680; x < 1196; x += 4) mag += `L${x} ${189.550 + .150 * Math.sin(x / 2.700)}`;
  mag += 'L1196 189.500L1201 190.300L1205 191.700L1209 194.700L1213.300 199.300L1217 204.500L1220 210.700L1223 217L1225.700 224L1228.500 233L1231 243L1233 251L1235 260L1237.600 275L1240 292L1242.300 308L1244.300 327L1246 345L1247.500 366L1249 398L1250 466';
  for (let i = 0; i < nulls.length - 1; i++) {
    for (let k = 1; k < 40; k++) {
      const t = k / 40;
      mag += `L${(nulls[i] + t * (nulls[i + 1] - nulls[i])).toFixed(2)} ${(423.500 - 69.700 * Math.log10(Math.sin(Math.PI * t))).toFixed(2)}`;
    }
  }
  document.getElementById('magnitude').setAttribute('d', mag);
  let y = 452.700, phase = `M676.5 190L1250.500 ${y}`;
  for (let i = 0; i < nulls.length - 1; i++) {
    y -= 7.600; phase += `L${nulls[i]} ${y}`;
    y += (nulls[i + 1] - nulls[i]) * .458; phase += `L${nulls[i + 1]} ${y}`;
  }
  document.getElementById('phase').setAttribute('d', phase);
</script>
</body>
</html>
